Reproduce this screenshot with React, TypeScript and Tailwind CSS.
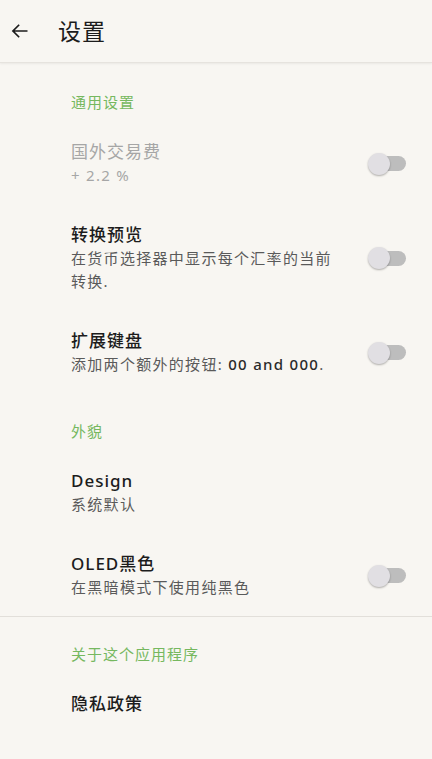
import React, { useState } from 'react';

const font = { fontFamily: '"Noto Sans", "Noto Sans CJK SC", sans-serif' };

function Toggle({ on, onChange }: { on: boolean; onChange?: () => void }) {
  return (
    <button onClick={onChange} className="relative w-[38px] h-[24px] shrink-0 flex items-center">
      <span className={`absolute left-[3px] right-0 h-[15px] rounded-full ${on ? 'bg-[#a9d69b]' : 'bg-[#bdbdbd]'}`} />
      <span
        className={`absolute top-[1px] w-[22px] h-[22px] rounded-full shadow-[0_1px_2px_rgba(0,0,0,0.3)] ${
          on ? 'left-[16px] bg-[#76b85f]' : 'left-0 bg-[#e1dfe3]'
        }`}
      />
    </button>
  );
}

function SectionTitle({ children, top }: { children: React.ReactNode; top: string }) {
  return (
    <div className={`pl-[71px] ${top} pb-[9px]`}>
      <div className="text-[15px] leading-[22px] tracking-[1px] text-[#76b85f]">{children}</div>
    </div>
  );
}

interface RowProps {
  title: React.ReactNode;
  desc?: React.ReactNode;
  disabled?: boolean;
  toggle?: boolean;
  pb?: string;
}

function Row({ title, desc, disabled, toggle, pb = 'pb-[18px]' }: RowProps) {
  const [on, setOn] = useState(false);
  return (
    <div className={`flex items-center pl-[71px] pr-[26px] pt-[18px] ${pb}`}>
      <div className="flex-1 pr-[28px]">
        <div
          className={`text-[17px] leading-[24px] tracking-[1px] ${
            disabled ? 'text-[#a6a6a6]' : 'text-[#1c1c1c] font-medium'
          }`}
        >
          {title}
        </div>
        {desc && (
          <div className={`text-[15px] leading-[23px] tracking-[1.3px] ${disabled ? 'text-[#a6a6a6]' : 'text-[#5a5a5a]'}`}>
            {desc}
          </div>
        )}
      </div>
      {toggle && <Toggle on={on} onChange={() => !disabled && setOn(!on)} />}
    </div>
  );
}

export default function App() {
  return (
    <div className="w-[432px] h-[759px] bg-[#f8f6f2] overflow-hidden" style={font}>
      <div className="h-[63px] flex items-center border-b border-[#e6e3de] shadow-[0_1px_2px_rgba(0,0,0,0.06)]">
        <svg className="ml-[10px] w-[20px] h-[20px]" viewBox="0 0 24 24" fill="none" stroke="#1c1c1c" strokeWidth="2">
          <path d="M21 12H4M11 4.5L3.5 12l7.5 7.5" />
        </svg>
        <span className="ml-[28px] text-[23px] tracking-[1px] text-[#1c1c1c]">设置</span>
      </div>

      <SectionTitle top="pt-[28px]">通用设置</SectionTitle>
      <Row title="国外交易费" desc="+ 2.2 %" disabled toggle />
      <Row title="转换预览" desc="在货币选择器中显示每个汇率的当前转换." toggle />
      <Row
        title="扩展键盘"
        desc={
          <>
            添加两个额外的按钮: <span className="font-medium text-[#2a2a2a]">00 and 000</span>.
          </>
        }
        toggle
      />

      <SectionTitle top="pt-[26px]">外貌</SectionTitle>
      <Row title="Design" desc="系统默认" />
      <Row title="OLED黑色" desc="在黑暗模式下使用纯黑色" toggle pb="pb-[17px]" />
      <div className="h-px bg-[#e2dfda]" />

      <SectionTitle top="pt-[26px]">关于这个应用程序</SectionTitle>
      <Row title="隐私政策" />
    </div>
  );
}
